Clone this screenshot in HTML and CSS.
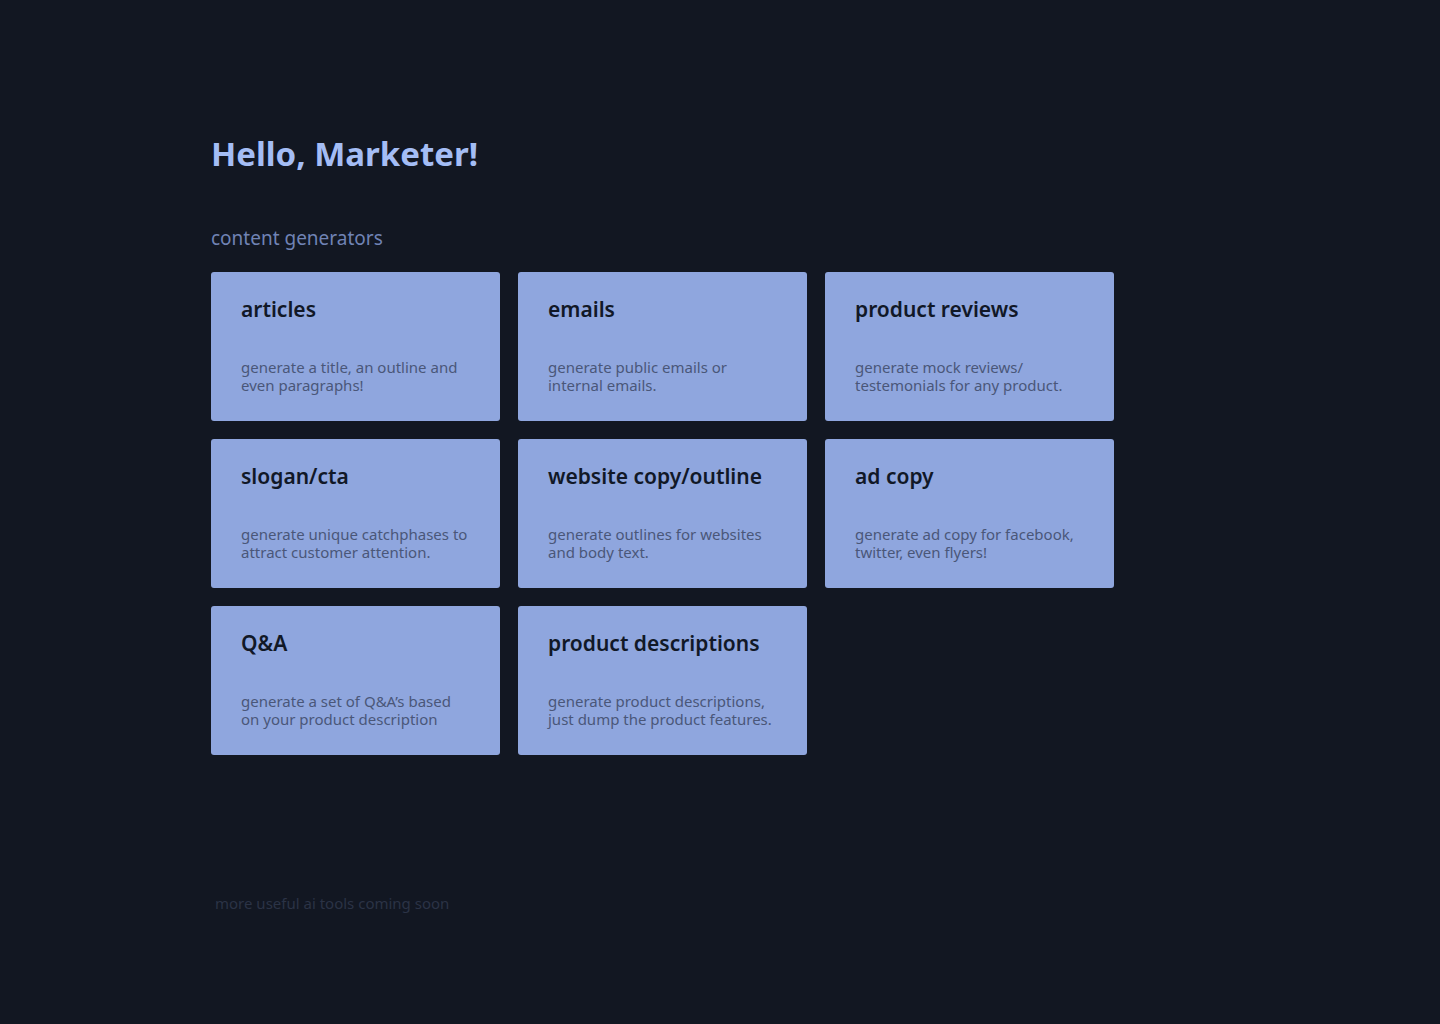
FILE: index.html
```html
<!DOCTYPE html>
<html lang="en">
<head>
<meta charset="utf-8">
<title>Hello, Marketer!</title>
<link rel="stylesheet" href="styles.css">
</head>
<body>
<main class="page">
  <h1 class="greeting">Hello, Marketer!</h1>
  <h2 class="section-label">content generators</h2>
  <div class="grid">
    <a class="card" href="#"><h3 class="card-title">articles</h3><p class="card-desc">generate a title, an outline and even paragraphs!</p></a>
    <a class="card" href="#"><h3 class="card-title">emails</h3><p class="card-desc">generate public emails or internal emails.</p></a>
    <a class="card" href="#"><h3 class="card-title">product reviews</h3><p class="card-desc">generate mock reviews/ testemonials for any product.</p></a>
    <a class="card" href="#"><h3 class="card-title">slogan/cta</h3><p class="card-desc">generate unique catchphases to attract customer attention.</p></a>
    <a class="card" href="#"><h3 class="card-title">website copy/outline</h3><p class="card-desc">generate outlines for websites and body text.</p></a>
    <a class="card" href="#"><h3 class="card-title">ad copy</h3><p class="card-desc">generate ad copy for facebook, twitter, even flyers!</p></a>
    <a class="card" href="#"><h3 class="card-title">Q&amp;A</h3><p class="card-desc">generate a set of Q&amp;A’s based on your product description</p></a>
    <a class="card" href="#"><h3 class="card-title">product descriptions</h3><p class="card-desc">generate product descriptions, just dump the product features.</p></a>
  </div>
  <p class="footer-note">more useful ai tools coming soon</p>
</main>
</body>
</html>
```

FILE: styles.css
```css
html, body {
  margin: 0;
  padding: 0;
  background: #121722;
  min-height: 100%;
}
body {
  font-family: "Noto Sans", "Open Sans", sans-serif;
}
.page {
  padding: 128px 0 0 211px;
}
.greeting {
  margin: 0;
  font-size: 33px;
  font-weight: 700;
  line-height: 52px;
  color: #a4bdf5;
}
.section-label {
  margin: 46px 0 0;
  font-size: 19px;
  font-weight: 400;
  line-height: 24px;
  color: #7083b5;
}
.grid {
  margin-top: 22px;
  display: grid;
  grid-template-columns: repeat(3, 289px);
  grid-auto-rows: 149px;
  gap: 18px;
}
.card {
  display: flex;
  flex-direction: column;
  justify-content: space-between;
  box-sizing: border-box;
  padding: 23px 30px 27px;
  background: #8fa6de;
  border-radius: 3px;
  text-decoration: none;
}
.card-title {
  margin: 0;
  font-size: 21px;
  font-weight: 600;
  line-height: 28px;
  color: #111827;
}
.card-desc {
  margin: 0;
  font-size: 15px;
  line-height: 18px;
  color: #4a5779;
}
.footer-note {
  margin: 138px 0 0 4px;
  font-size: 15px;
  line-height: 20px;
  color: #2b3346;
}
```
